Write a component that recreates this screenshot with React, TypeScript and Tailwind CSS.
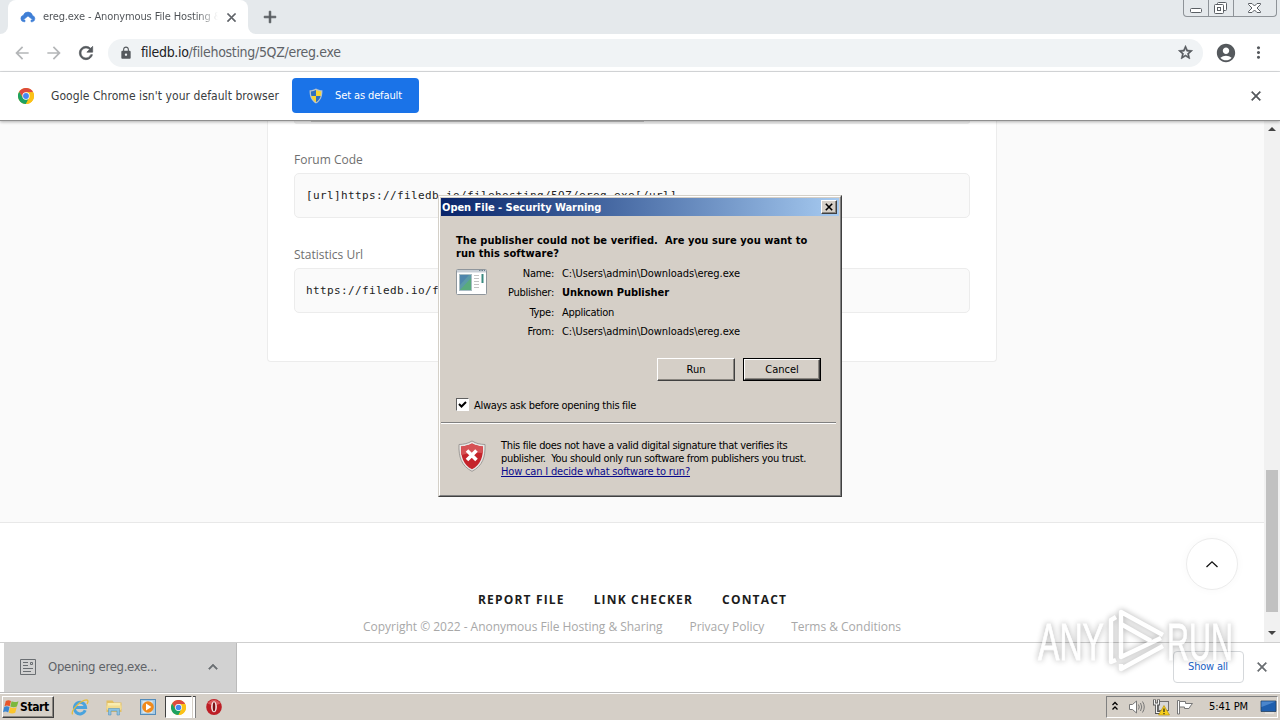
import type { ReactNode } from "react";
import {
  MdAccountCircle,
  MdAdd,
  MdArrowBack,
  MdArrowForward,
  MdClose,
  MdKeyboardArrowUp,
  MdLock,
  MdMoreVert,
  MdRefresh,
  MdStarBorder,
} from "react-icons/md";

const boldGlyph = "[&>path:last-child]:stroke-current [&>path:last-child]:[stroke-width:0.8px]";

function ChromeLogo({ className }: { className: string }) {
  return (
    <svg viewBox="0 0 48 48" className={className}>
      <circle cx="24" cy="24" r="24" fill="#fbc116" />
      <path d="M24 13H45.500A24 24 0 0 0 3.500 11.500L14.500 29.5Z" fill="#dd4b3e" />
      <path d="M3.500 11.500A24 24 0 0 0 24 48L33.5 29.5 24 34 14.5 29.5Z" fill="#1da261" />
      <path d="M24 48A24 24 0 0 0 45.500 13H24l9.5 16.5Z" fill="#fbc116" />
      <circle cx="24" cy="24" r="11" fill="#fff" />
      <circle cx="24" cy="24" r="8.8" fill="#4688f1" />
    </svg>
  );
}

function CloudIcon() {
  return (
    <svg viewBox="0 0 16 16" className="size-4 shrink-0">
      <path d="M4.2 12.8H4A3.3 3.3 0 0 1 3.4 6.3 4.8 4.8 0 0 1 12.6 6.6 3.2 3.2 0 0 1 12.3 12.8H11V11H13L8 7 3.200 11H5V12.8Z" fill="#3f7fd6" stroke="#3f7fd6" strokeWidth=".6" />
    </svg>
  );
}

function UacShield() {
  return (
    <svg viewBox="0 0 16 16" className="size-4">
      <path d="M8 .5C10 1.700 12 2.200 14.400 2.300 14.600 8 13 12.700 8 15.600 3 12.700 1.400 8 1.600 2.300 4 2.200 6 1.700 8 .5Z" fill="#b9c4cc" />
      <path d="M8 2C6.400 2.900 4.700 3.400 2.900 3.500 2.900 5.200 3 6.700 3.400 8H8Z" fill="#2f6fc0" />
      <path d="M8 2C9.600 2.900 11.300 3.400 13.100 3.500 13.100 5.200 13 6.700 12.600 8H8Z" fill="#f7d433" />
      <path d="M3.400 8C4 10.800 5.500 12.700 8 14.200V8Z" fill="#f7d433" />
      <path d="M12.600 8C12 10.800 10.500 12.700 8 14.200V8Z" fill="#2f6fc0" />
    </svg>
  );
}

function WindowButtons() {
  return (
    <div className="flex h-[17px] w-[94px] rounded-b-[4px] border border-t-0 border-[#8e9398] text-[#5a5f64]">
      <div className="w-[25px] border-r border-[#8e9398]">
        <svg viewBox="0 0 25 16" className="h-4 w-[25px]">
          <rect x="6.500" y="8.500" width="11" height="4" rx="1" fill="#fff" stroke="currentColor" />
        </svg>
      </div>
      <div className="w-[25px] border-r border-[#8e9398]">
        <svg viewBox="0 0 25 16" className="h-4 w-[25px]" fill="#fff" stroke="currentColor">
          <rect x="8.500" y="2.500" width="9" height="8" rx="1" />
          <rect x="5.500" y="4.500" width="9" height="9" rx="1" />
          <rect x="8.500" y="7.500" width="3" height="3" />
        </svg>
      </div>
      <div className="flex-1">
        <svg viewBox="0 0 41 16" className="h-4 w-[41px]">
          <path d="M14.500 3.500H18L20.500 6 23 3.500H26.500V4.500L23 8 26.500 11.500V12.500H23L20.500 10 18 12.500H14.500V11.500L18 8 14.500 4.500Z" fill="#fff" stroke="currentColor" />
        </svg>
      </div>
    </div>
  );
}

function TabStrip() {
  return (
    <div className="flex h-[34px] shrink-0 bg-[#e5e9ec]">
      <div className="flex w-2 items-end bg-white">
        <div className="h-full w-2 rounded-br-[8px] bg-[#e5e9ec]" />
      </div>
      <div className="bg-[#e5e9ec]">
        <div className="flex h-full w-[240px] items-center rounded-t-[8px] bg-white pl-3">
          <CloudIcon />
          <div className="ml-[7px] w-[175px] overflow-hidden whitespace-nowrap bg-linear-to-r from-[#4c5054] from-88% to-transparent bg-clip-text text-[11px] tracking-[-0.125px] text-transparent">
            ereg.exe - Anonymous File Hosting &amp; Sharing
          </div>
          <MdClose className={`ml-[6px] size-[15px] text-[#5f6368] ${boldGlyph}`} />
        </div>
      </div>
      <div className="flex w-2 items-end bg-white">
        <div className="h-full w-2 rounded-bl-[8px] bg-[#e5e9ec]" />
      </div>
      <div className="flex w-[28px] items-center justify-center">
        <MdAdd className={`size-[20px] text-[#55595d] ${boldGlyph}`} />
      </div>
      <div className="ml-auto pr-[3px]">
        <WindowButtons />
      </div>
    </div>
  );
}

function Toolbar() {
  return (
    <div className="flex h-[38px] shrink-0 items-center border-b border-[#dcdee0] bg-white">
      <MdArrowBack className="ml-3 size-5 text-[#b4b6b8]" />
      <MdArrowForward className="ml-3 size-5 text-[#b4b6b8]" />
      <MdRefresh className={`ml-3 size-5 text-[#55595d] ${boldGlyph}`} />
      <div className="ml-3 flex h-7 w-[1095px] items-center rounded-full bg-[#f0f3f5] pl-[11px] pr-[9px]">
        <MdLock className="size-[14px] text-[#55595d]" />
        <div className="ml-[8px] text-[14px] tracking-[-0.310px] text-[#5f6368]">
          <span className="text-[#202124]">filedb.io</span>/filehosting/5QZ/ereg.exe
        </div>
        <MdStarBorder className={`ml-auto size-[17px] text-[#55595d] ${boldGlyph}`} />
      </div>
      <MdAccountCircle className="ml-3 size-[22px] text-[#55595d]" />
      <MdMoreVert className="ml-3 size-[19px] text-[#55595d]" />
    </div>
  );
}

function DefaultBrowserBar() {
  return (
    <div className="z-10 flex h-[49px] shrink-0 items-center border-b border-[#8f8f8f] bg-white pl-[18px] pr-4 shadow-[0_1px_3px_rgba(0,0,0,0.3)]">
      <ChromeLogo className="size-4" />
      <div className="ml-[17px] w-[241px] whitespace-nowrap text-[12px] tracking-[0.059px] text-[#3a3d40]">
        Google Chrome isn't your default browser
      </div>
      <div className="mb-px flex h-[35px] w-[127px] items-center rounded-[4px] bg-[#1a73e8] pl-4 text-[11px] tracking-[-0.113px] text-white">
        <UacShield />
        <span className="ml-[11px] pt-px">Set as default</span>
      </div>
      <MdClose className={`ml-auto size-4 text-[#55595d] ${boldGlyph}`} />
    </div>
  );
}

function CodeField({ label, value }: { label: string; value: string }) {
  return (
    <div>
      <div className="h-[26px] font-['Open_Sans',sans-serif] text-[12px] leading-[26px] text-[#6f6f6f]">{label}</div>
      <div className="flex h-[45px] items-center rounded-[5px] border border-[#ececec] bg-[#fafafa] pl-[11px] pt-[2px] font-['DejaVu_Sans_Mono',monospace] text-[11px] tracking-[0.378px] text-[#222]">
        {value}
      </div>
    </div>
  );
}

function PageContent() {
  return (
    <div className="flex min-w-0 flex-1 flex-col bg-[#fafafa]">
      <div className="ml-[267px] h-[241px] w-[730px] rounded-b-[4px] border border-t-0 border-[#ececec] bg-white px-[26px]">
        <div className="h-[3px] rounded-b-[5px] border border-t-0 border-[#ececec] bg-[#f1f1f1] px-4">
          <div className="h-px w-[333px] bg-[#c4c4c4]" />
        </div>
        <div className="flex flex-col gap-6 pt-[23px]">
          <CodeField label="Forum Code" value="[url]https://filedb.io/filehosting/5QZ/ereg.exe[/url]" />
          <CodeField label="Statistics Url" value="https://filedb.io/filehosting/5QZ/ereg.exe" />
        </div>
      </div>
      <div className="mt-auto h-[120px] border-t border-[#e8e8e8] bg-white font-['Open_Sans',sans-serif] text-[12px]">
        <div className="flex gap-[29px] pl-[478px] pt-[68px] font-bold leading-[18px] tracking-[1.170px] text-[#1c1c1c]">
          <span>REPORT FILE</span>
          <span>LINK CHECKER</span>
          <span>CONTACT</span>
        </div>
        <div className="flex gap-[27px] whitespace-nowrap pl-[363px] pt-[9px] leading-[18px] tracking-[-0.020px] text-[#a8a8a8]">
          <span>Copyright © 2022 - Anonymous File Hosting &amp; Sharing</span>
          <span>Privacy Policy</span>
          <span>Terms &amp; Conditions</span>
        </div>
      </div>
      <div className="absolute left-[1186px] top-[538px] flex size-[52px] items-center justify-center rounded-full border border-[#ececec] bg-white shadow-[0_0_10px_rgba(0,0,0,0.03)]">
        <svg viewBox="0 0 14 8" className="h-2 w-[14px]">
          <path d="M1.500 7 7 1.800 12.500 7" fill="none" stroke="#111" strokeWidth="1.300" />
        </svg>
      </div>
    </div>
  );
}

function Scrollbar() {
  return (
    <div className="flex w-4 flex-col items-center bg-[#f1f1f1]">
      <svg viewBox="0 0 16 16" className="size-4">
        <path d="M4 10 8 6 12 10Z" fill="#444" />
      </svg>
      <div className="mt-[333px] h-[142px] w-3 bg-[#c1c1c1]" />
      <svg viewBox="0 0 16 16" className="mt-auto mb-px size-4">
        <path d="M4 6 8 10 12 6Z" fill="#444" />
      </svg>
    </div>
  );
}

function DownloadShelf() {
  return (
    <div className="flex h-[51px] shrink-0 items-center border-b border-t border-b-[#bdbdbd] border-t-[#cfcfcf] bg-white pl-1">
      <div className="flex h-full w-[233px] items-center border-r border-[#bbb] bg-[#d2d2d2] pb-[2px] pl-4">
        <svg viewBox="0 0 16 16" className="size-4" fill="none" stroke="#6a6e72">
          <path d="M.5 .5H15.500V15.500H.5Z" />
          <path d="M3 3.500H8M3 6.500H8M3 9.500H13M3 12.500H11" />
          <path d="M10.500 3.500H12.500V5.500H10.500Z" />
        </svg>
        <span className="ml-3 text-[13px] tracking-[-0.312px] text-[#5f6368]">Opening ereg.exe...</span>
        <MdKeyboardArrowUp className={`ml-auto mr-[14px] size-[18px] text-[#6a6e72] ${boldGlyph}`} />
      </div>
      <div className="ml-auto mb-[2px] flex h-8 w-[71px] items-center justify-center rounded-[4px] border border-[#d5d8db] text-[11px] leading-[14px] tracking-[-0.200px] text-[#1a62c4]">
        <span className="pr-px pt-px">Show all</span>
      </div>
      <MdClose className={`mb-[2px] ml-[10px] mr-[10px] size-4 text-[#6a6e72] ${boldGlyph}`} />
    </div>
  );
}

function WindowsFlag() {
  return (
    <svg viewBox="0 0 16 16" className="size-4">
      <path d="M2.800 2.100Q5.200 .3 8 1.900L6.700 7.300Q4 6 1.500 7.200Z" fill="#e8562a" />
      <path d="M8.600 2.300Q11.500 3.900 15.500 2.200L13.900 7.600Q10.500 9 7.300 7.600Z" fill="#7cb83c" />
      <path d="M1.200 7.900Q3.800 6.700 6.500 8L5.200 13.400Q2.500 11.700 0 13.200Z" fill="#3b86d0" />
      <path d="M7.100 8.300Q10 9.700 13.700 8.300L12.200 13.800Q9 15.200 5.800 13.700Z" fill="#fbc52d" />
    </svg>
  );
}

function InternetExplorerIcon() {
  return (
    <svg viewBox="0 0 18 18" className="size-[18px]" fill="none">
      <path d="M14.200 12.300A5.600 5.800 0 1 1 14.600 9.600H5" stroke="#4aa3dd" strokeWidth="3" />
      <path d="M1.600 16.300C-.6 13 9.500 2 15.500 1.800 17.500 2 17.300 4 16 6" stroke="#e6bd3c" strokeWidth="1.300" />
    </svg>
  );
}

function ExplorerIcon() {
  return (
    <svg viewBox="0 0 18 18" className="size-[18px]">
      <path d="M1.500 2.500H7.500L9 4.500H16.500V14H1.500Z" fill="#e3bf62" />
      <path d="M2.500 5H15.500V12H2.500Z" fill="#faedb0" />
      <path d="M1.500 7.500H16.500V11H1.500Z" fill="#f3dc8f" />
      <path d="M3.500 17V10.500H14.500V17H12V13H6V17Z" fill="#8cc3e2" stroke="#5a96bd" strokeWidth=".6" />
    </svg>
  );
}

function MediaPlayerIcon() {
  return (
    <svg viewBox="0 0 18 18" className="size-[18px]">
      <rect x="1.500" y="1.500" width="15" height="15" fill="#a8cbe4" stroke="#548cba" />
      <rect x="3.500" y="3" width="10" height="12" fill="#d7e7f2" />
      <circle cx="9" cy="9" r="5.800" fill="#f08a1c" />
      <path d="M7 5.600 12.400 9 7 12.400Z" fill="#fff" />
    </svg>
  );
}

function OperaIcon() {
  return (
    <svg viewBox="0 0 18 18" className="size-[18px]">
      <ellipse cx="9" cy="9" rx="7.800" ry="8" fill="#bd1e25" />
      <path d="M2.500 5.500Q9-2 15.500 5.500 9 9 2.500 5.500Z" fill="#d9575a" />
      <ellipse cx="9" cy="8.800" rx="2.900" ry="5.500" fill="#f6e9e9" />
      <ellipse cx="9" cy="8.800" rx="1.300" ry="4.600" fill="#7c1015" />
    </svg>
  );
}

function Tray() {
  return (
    <div className="ml-auto mr-[2px] flex h-[22px] w-[172px] items-center border border-b-white border-l-[#808080] border-r-white border-t-[#808080] pl-[4px]">
      <svg viewBox="0 0 8 12" className="h-3 w-2" fill="none" stroke="#000" strokeWidth="1.300">
        <path d="M1.500 4 4 1.500 6.500 4M1.500 8.500 4 6 6.500 8.500" />
      </svg>
      <svg viewBox="0 0 18 18" className="ml-[9px] size-[18px]" stroke="#777" fill="none">
        <path d="M1.500 6.500H4.500L8.500 3V15L4.500 11.500H1.500Z" fill="#fff" />
        <path d="M10.500 6.500Q12 9 10.500 11.500M12.500 5Q15 9 12.500 13M14.500 3.500Q18 9 14.500 14.500" />
      </svg>
      <svg viewBox="0 0 18 18" className="ml-[6px] size-[18px]">
        <rect x="6.500" y="3.500" width="10" height="9" fill="#d8d8d8" stroke="#707070" />
        <path d="M8 15H14" stroke="#707070" strokeWidth="1.500" />
        <path d="M2.500 1.500V6H6.500V1.500M4.500 6V14.500H8" stroke="#555" strokeWidth="3" fill="none" />
        <path d="M2.500 2V6H6.500V2M4.500 6V14.500H8" stroke="#f4f4f4" strokeWidth="1.200" fill="none" />
        <path d="M12 7.500 17.500 17H6.500Z" fill="#f7cf1d" stroke="#b18b00" strokeWidth=".6" />
        <path d="M12 10.500V14M12 15V16.200" stroke="#222" strokeWidth="1.200" />
      </svg>
      <svg viewBox="0 0 18 18" className="ml-[6px] size-[18px]" stroke="#777" fill="#fff">
        <path d="M1.500 2.500H3.500V16H1.500Z" />
        <path d="M3.500 3.500H9.500V5.500H16.500L14.500 8 13 10.500H8.500V9H3.500Z" />
      </svg>
      <span className="ml-[15px] w-[42px] whitespace-nowrap pt-px text-[11px] tracking-[-0.124px]">5:41 PM</span>
      <svg viewBox="0 0 17 16" className="ml-auto h-4 w-[17px]">
        <path d="M1 2H16V12.500H1Z" fill="#1f5fae" stroke="#26415f" strokeWidth=".8" />
        <path d="M1.500 2.500H15.500L1.500 8Z" fill="#4b86cc" />
        <path d="M5 13.500H14V14.500H5Z" fill="#eee" />
      </svg>
    </div>
  );
}

function Taskbar() {
  return (
    <div className="flex flex-1 items-center border-t border-white bg-[#d5cfc7]">
      <div className="ml-[2px] flex h-[22px] w-[52px] items-center border border-b-[#404040] border-l-white border-r-[#404040] border-t-white text-[12px] font-bold tracking-[-0.400px] shadow-[inset_-1px_-1px_0_#8a8680]">
        <WindowsFlag />
        <span className="ml-[1px] text-black">Start</span>
      </div>
      <div className="ml-[17px] flex items-center gap-[16px]">
        <InternetExplorerIcon />
        <ExplorerIcon />
        <MediaPlayerIcon />
      </div>
      <div className="ml-[8px] flex h-[22px] w-[27px] items-center justify-center border border-b-white border-l-[#404040] border-r-white border-t-[#404040] bg-[#fcfbfa]">
        <ChromeLogo className="size-[15px]" />
      </div>
      <div className="ml-px h-[22px] w-[3px] border-r border-t border-r-[#808080] border-t-[#404040] bg-white" />
      <div className="ml-[9px]">
        <OperaIcon />
      </div>
      <Tray />
    </div>
  );
}

function DetailRow({ label, children }: { label: string; children: ReactNode }) {
  return (
    <div className="flex leading-[13px]">
      <span className="w-[98px] text-right tracking-[-0.26px]">{label}</span>
      <span className="ml-[8px]">{children}</span>
    </div>
  );
}

function ProgramIcon() {
  return (
    <svg viewBox="0 0 32 28" className="absolute left-[15px] top-[52px] h-7 w-8">
      <rect x=".5" y="1.500" width="30" height="25" rx="1" fill="#fff" stroke="#8f969c" />
      <path d="M1 2H30V4.500H1Z" fill="#c8cfd6" />
      <path d="M23 2.500H29" stroke="#6b8291" strokeDasharray="1.500 1" />
      <rect x="3.500" y="6.500" width="12" height="16" fill="#5b9aa8" stroke="#a9bdc4" />
      <path d="M4 22 15 10V22Z" fill="#59ab7c" />
      <path d="M4 7H13L4 17Z" fill="#4f86ac" />
      <path d="M18 7.500H23M18 10.500H23M18 13.500H23M18 16.500H23M18 19.500H23" stroke="#c3c3c3" />
      <path d="M26.500 6V15" stroke="#3c8a80" strokeWidth="2" />
    </svg>
  );
}

function ErrorShield() {
  return (
    <svg viewBox="0 0 28 32" className="h-8 w-7 shrink-0">
      <path d="M14 1C18 3.500 22 4.300 27 4.500 27.500 17 24.500 26 14 31.300 3.500 26 .5 17 1 4.500 6 4.300 10 3.500 14 1Z" fill="#e9e6e4" stroke="#8d8a88" strokeWidth=".8" />
      <path d="M14 3.500C17.500 5.400 21 6.200 25 6.400 25.200 16.800 22.800 24.500 14 29.200 5.200 24.500 2.800 16.800 3 6.400 7 6.200 10.500 5.400 14 3.500Z" fill="#c5242b" />
      <path d="M14 3.500C17.500 5.400 21 6.200 25 6.400L24.800 13Q14 12 3.200 15L3 6.400C7 6.200 10.500 5.400 14 3.500Z" fill="#d65255" />
      <path d="M9 10.500 18.500 20M18.500 10.500 9 20" stroke="#fff" strokeWidth="3.600" />
    </svg>
  );
}

function SecurityDialog() {
  return (
    <div className="absolute left-[438px] top-[195px] h-[302px] w-[404px] border border-b-[#404040] border-l-[#d4d0c8] border-r-[#404040] border-t-[#d4d0c8] text-[11px] leading-[13px] text-black">
      <div className="flex h-full flex-col border border-b-[#808080] border-l-white border-r-[#808080] border-t-white bg-[#d5cfc7] p-px">
        <div className="flex h-[18px] shrink-0 items-center bg-linear-to-r from-[#0a246a] to-[#a6caf0] pl-px pr-[2px] font-bold text-white">
          <span className="tracking-[-0.030px]">Open File - Security Warning</span>
          <div className="ml-auto flex h-[14px] w-4 items-center justify-center border border-b-[#404040] border-l-white border-r-[#404040] border-t-white bg-[#d5cfc7] shadow-[inset_-1px_-1px_0_#8a8680]">
            <svg viewBox="0 0 8 8" className="mb-px mr-px h-2 w-2">
              <path d="M.8 .8 7.200 7.200M7.200 .8 .8 7.200" stroke="#000" strokeWidth="1.600" />
            </svg>
          </div>
        </div>
        <div className="relative">
          <div className="whitespace-pre pl-[15px] pt-[18px] font-bold tracking-[0.068px]">
            {"The publisher could not be verified.  Are you sure you want to\nrun this software?"}
          </div>
          <ProgramIcon />
          <div className="flex flex-col gap-[6.300px] pl-[15px] pt-[7px] tracking-[-0.049px]">
            <DetailRow label="Name:">C:\Users\admin\Downloads\ereg.exe</DetailRow>
            <DetailRow label="Publisher:">
              <b>Unknown Publisher</b>
            </DetailRow>
            <DetailRow label="Type:">
              <span className="tracking-[-0.300px]">Application</span>
            </DetailRow>
            <DetailRow label="From:">C:\Users\admin\Downloads\ereg.exe</DetailRow>
          </div>
          <div className="flex justify-end gap-[8px] pr-[18px] pt-[20px]">
            <div className="flex h-[23px] w-[78px] items-center justify-center border border-b-[#404040] border-l-white border-r-[#404040] border-t-white shadow-[inset_-1px_-1px_0_#8a8680]">
              Run
            </div>
            <div className="h-[23px] w-[78px] border border-black">
              <div className="flex h-full items-center justify-center border border-b-[#404040] border-l-white border-r-[#404040] border-t-white shadow-[inset_-1px_-1px_0_#8a8680]">
                Cancel
              </div>
            </div>
          </div>
          <div className="flex items-center pl-[15px] pt-[17px]">
            <div className="mb-px flex size-[13px] items-center justify-center border border-b-white border-l-[#606060] border-r-white border-t-[#606060] bg-white">
              <svg viewBox="0 0 9 9" className="size-[9px]">
                <path d="M1 4 3.500 6.500 8 2" fill="none" stroke="#000" strokeWidth="2" />
              </svg>
            </div>
            <span className="ml-[5px] pt-px tracking-[-0.295px]">Always ask before opening this file</span>
          </div>
          <div className="mr-[3px] mt-[10px] h-[2px] border-b border-t border-b-white border-t-[#808080]" />
          <div className="flex pl-[17px] pt-[15px]">
            <div className="pt-px">
              <ErrorShield />
            </div>
            <div className="ml-[15px] whitespace-pre tracking-[-0.341px]">
              <div>This file does not have a valid digital signature that verifies its</div>
              <div>{"publisher.  You should only run software from publishers you trust."}</div>
              <div className="tracking-[-0.178px] text-[#0a0a8c] underline">How can I decide what software to run?</div>
            </div>
          </div>
        </div>
      </div>
    </div>
  );
}

function Watermark() {
  return (
    <svg
      viewBox="0 0 210 80"
      className="pointer-events-none absolute left-[1030px] top-[600px] h-20 w-[210px] opacity-65 drop-shadow-[0_0_3px_rgba(0,0,0,0.5)]"
    >
      <g fill="#fff" stroke="#fff" strokeWidth=".8" fontFamily="'Liberation Sans Narrow','Liberation Sans',sans-serif" fontSize="52">
        <text x="8" y="60" textLength="66" lengthAdjust="spacingAndGlyphs">ANY</text>
        <text x="137" y="60" textLength="66" lengthAdjust="spacingAndGlyphs">RUN</text>
      </g>
      <g fill="none" stroke="#fff" strokeWidth="4.400" strokeLinejoin="round">
        <path d="M133 35 91 12V57L131 38" />
        <path d="M86 17 81 20V62L86 60" />
        <path d="M91 24 121 41M91 64V69L133 46" />
      </g>
    </svg>
  );
}

export default function App() {
  return (
    <div className="relative flex h-[720px] w-[1280px] flex-col overflow-hidden bg-white font-['DejaVu_Sans_Condensed','DejaVu_Sans',sans-serif]">
      <TabStrip />
      <Toolbar />
      <DefaultBrowserBar />
      <div className="flex min-h-0 flex-1">
        <PageContent />
        <Scrollbar />
      </div>
      <DownloadShelf />
      <div className="flex h-[27px] shrink-0">
        <Taskbar />
      </div>
      <SecurityDialog />
      <Watermark />
    </div>
  );
}
